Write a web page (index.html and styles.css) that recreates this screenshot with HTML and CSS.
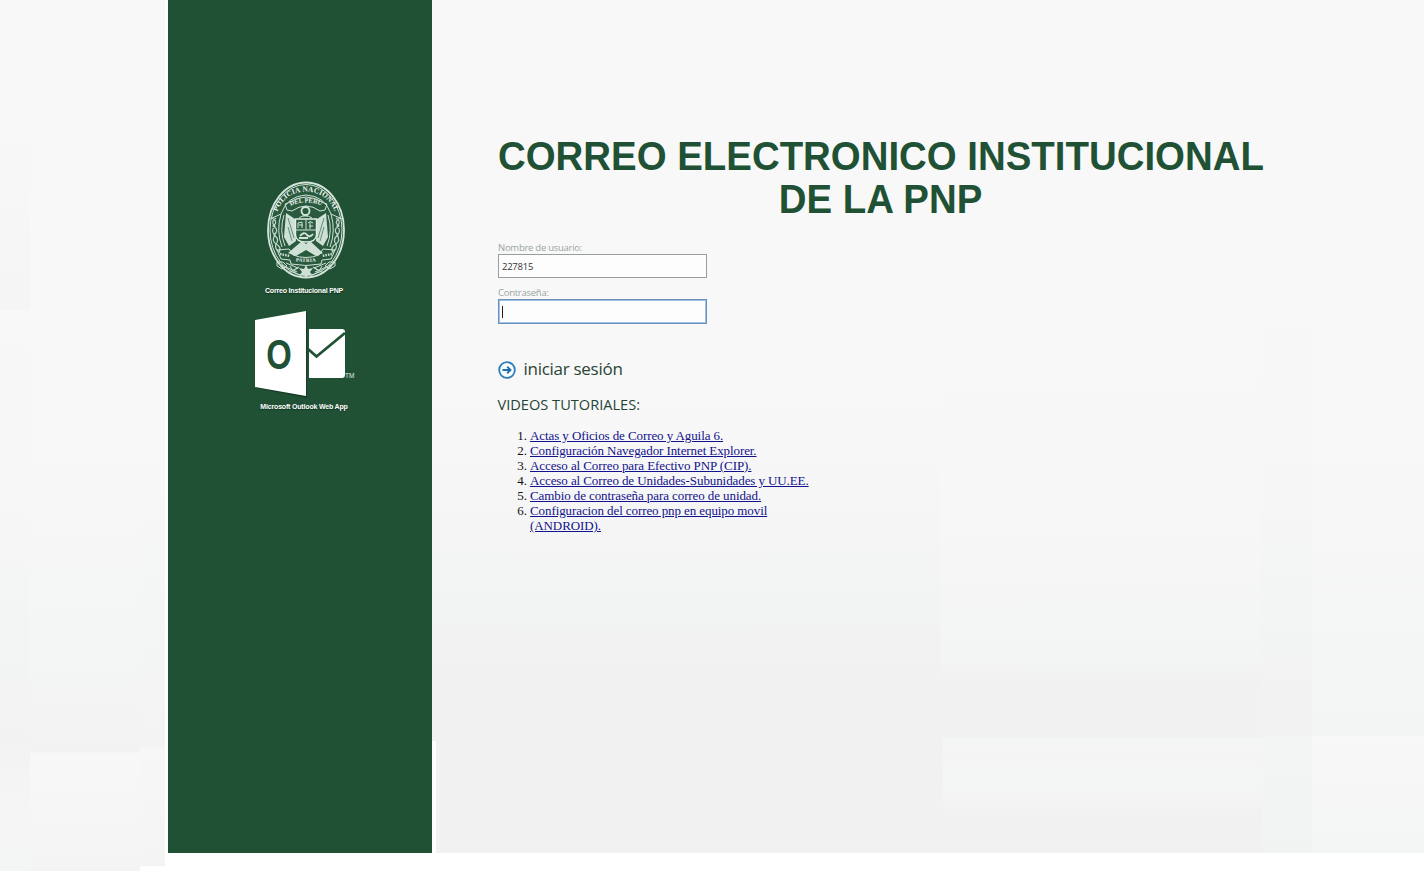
FILE: index.html
```html
<!DOCTYPE html>
<html lang="es">
<head>
<meta charset="utf-8">
<title>Correo Institucional PNP</title>
<link rel="stylesheet" href="styles.css">
</head>
<body>
<div class="page">
  <aside class="sidebar">
    <svg class="emblem" viewBox="0 0 80 98" width="80" height="98">
      <defs>
        <path id="arc-top" d="M9 45 C9 -1 71 -1 71 45"/>
        <path id="arc-mid" d="M20 27 Q40 16 60 27"/>
        <path id="arc-low" d="M24 79 Q40 83 56 79"/>
      </defs>
      <ellipse cx="40" cy="49" rx="38" ry="47.500" class="ring"/>
      <ellipse cx="40" cy="49" rx="36" ry="45.500" class="hair"/>
      <path class="hair" d="M4 38 L15 33 Q21 15 40 14 Q59 15 65 33 L76 38"/>
      <path class="hair" d="M15 33 Q10 50 16 66 M65 33 Q70 50 64 66 M18 34 Q13 50 19 65 M62 34 Q67 50 61 65"/>
      <path class="braid" d="M10 37 q-6 4 -1 8 q-5 5 0 9 q-4 5 1 9 q-2 5 4 8 M6 37 q7 4 1 8 q7 4 1 9 q6 4 2 9 q6 3 3 9"/>
      <path class="braid" d="M70 37 q6 4 1 8 q5 5 0 9 q4 5 -1 9 q2 5 -4 8 M74 37 q-7 4 -1 8 q-7 4 -1 9 q-6 4 -2 9 q-6 3 -3 9"/>
      <text class="seal-text"><textPath href="#arc-top" startOffset="50%">POLICIA NACIONAL</textPath></text>
      <path class="hair" d="M21 29 l-2 -6 3 -1 Q40 10 58 22 l3 1 -2 6 -5 1 Q40 20 26 30z"/>
      <text class="seal-text seal-small"><textPath href="#arc-mid" startOffset="50%">DEL PERU</textPath></text>
      <circle cx="39.500" cy="30" r="4" class="crown"/>
      <path class="hair" d="M33 37 Q39 32 46 37 M37 35 h5"/>
      <path class="leaf" d="M20 32 L29 38 30 60 23 65 18 56z M60 32 L51 38 50 60 57 65 62 56z"/>
      <path class="cut" d="M22 37 l6 20 M22 46 l4 14 M58 37 l-6 20 M58 46 l-4 14"/>
      <path class="shield" d="M29.500 38 H50.500 V54 Q50 61 40 61 Q30 61 29.500 54z"/>
      <path class="hair" d="M29.500 49 H50.500 M40 38 V49 M32 47 v-5 l4 -1 v6 M33 44 h4 M44 48 v-7 M42 42 q2 -3 5 0 M43 45 h4"/>
      <path class="crown" d="M34 55 q4 -5 7 -1 q3 3 6 -1 M33 57 h9"/>
      <path class="leaf" d="M22 72 L36 60 40 63 44 60 57 72 50 75 40 69 30 75z"/>
      <path class="hair" d="M11 69 L23 68 27 74 Q40 79 53 74 L57 68 69 69 65 78 56 79 55 83 Q40 86 25 83 L24 79 15 78z"/>
      <path class="dots" d="M14 73 l10 2 M66 73 l-10 2"/>
      <text class="seal-text seal-low"><textPath href="#arc-low" startOffset="50%">PATRIA</textPath></text>
      <path class="hair" d="M11 81 h6 l4 4 -5 3 -5 -3z M69 81 h-6 l-4 4 5 3 5 -3z M20 82 l12 5 -10 5 M60 82 l-12 5 10 5 M24 85 q3 7 10 9 M56 85 q-3 7 -10 9"/>
      <path class="braid" d="M13 83 l18 8 M67 83 l-18 8 M23 92 l10 -6 M57 92 l-10 -6"/>
      <path class="leaf" d="M40 84 l2 4 5 -1 -3 4 3 4 -5 -1 -2 3 -2 -3 -5 1 3 -4 -3 -4 5 1z"/>
    </svg>
    <p class="caption">Correo Institucional PNP</p>
    <svg class="outlook" viewBox="0 0 104 90" width="104" height="90">
      <path class="shade" d="M2 11.500 L53 2 V88 L2 78z"/>
      <path class="white" d="M1 10 L52 1 V86 L1 77z"/>
      <text class="letter-o" transform="translate(25 59) scale(.78 1)">O</text>
      <path class="white" d="M55 19 H88 Q91 19 91 22 V65 Q91 68 88 68 H55z"/>
      <path class="check" d="M54 39 L62.500 46.500 L91 23"/>
      <text class="tm" x="91" y="67.500">TM</text>
    </svg>
    <p class="caption caption-app">Microsoft Outlook Web App</p>
  </aside>
  <main class="content">
    <h1 class="title">CORREO ELECTRONICO INSTITUCIONAL<br>DE LA PNP</h1>
    <form class="form">
      <label class="label" for="user">Nombre de usuario:</label>
      <input class="field-box" id="user" type="text" value="227815">
      <label class="label label-pass" for="pass">Contraseña:</label>
      <div class="field-box focused" id="pass"><span class="caret"></span></div>
    </form>
    <div class="signin">
      <svg class="go" width="18" height="18" viewBox="0 0 18 18">
        <circle cx="9" cy="9" r="7.800" fill="#fafdfe" stroke="#2b7dbb" stroke-width="1.800"/>
        <path d="M4.500 9 H12.200 M9.200 5.800 L12.500 9 L9.200 12.200" fill="none" stroke="#226eaa" stroke-width="1.900"/>
      </svg>
      <span class="signin-text">iniciar sesión</span>
    </div>
    <h2 class="videos">VIDEOS TUTORIALES:</h2>
    <ol class="links">
      <li><a href="#">Actas y Oficios de Correo y Aguila 6.</a></li>
      <li><a href="#">Configuración Navegador Internet Explorer.</a></li>
      <li><a href="#">Acceso al Correo para Efectivo PNP (CIP).</a></li>
      <li><a href="#">Acceso al Correo de Unidades-Subunidades y UU.EE.</a></li>
      <li><a href="#">Cambio de contraseña para correo de unidad.</a></li>
      <li><a href="#">Configuracion del correo pnp en equipo movil<br>(ANDROID).</a></li>
    </ol>
  </main>
</div>
</body>
</html>
```
FILE: styles.css
```css
* { box-sizing: border-box; }
body { margin: 0; background: #fff; }
.page {
  display: grid;
  grid-template-columns: 264px 1fr;
  height: 871px;
  padding-left: 168px;
  overflow: hidden;
  background-repeat: no-repeat;
  background-image:
    linear-gradient(#f8f8f8 0 130px, #f5f5f5 310px, #f8f8f8 311px, #f7f7f7 500px, #f3f4f4 620px, #f2f2f2 740px, #f5f5f5 800px, #f4f5f5),
    linear-gradient(#f8f8f8 0 450px, #f4f5f5 650px, #f2f2f2 752px, #f8f8f8 753px, #f4f4f4),
    linear-gradient(#f8f8f8 0 450px, #f4f5f5 610px, #f3f3f3 747px, #f7f7f7 748px, #f4f4f4);
  background-size: 30px 871px, 110px 871px, 25px 866px;
  background-position: 0 0, 30px 0, 140px 0;
}
.sidebar {
  display: flex;
  flex-direction: column;
  align-items: center;
  height: 853px;
  padding-top: 181px;
  background: #205134;
}
.emblem { margin-left: 12px; }
.ring { fill: #2a5a3e; stroke: #d4e5dc; stroke-width: 1.8; }
.hair { fill: none; stroke: #cfe1d7; stroke-width: 1; }
.braid { fill: none; stroke: #c2d7cb; stroke-width: 1.2; }
.dots { fill: none; stroke: #c5d9ce; stroke-width: 2.4; stroke-dasharray: 1.6 1; }
.seal-text { fill: #eff7f2; font: bold 7.4px "Liberation Serif", serif; text-anchor: middle; letter-spacing: .1px; }
.seal-small { font-size: 6.4px; letter-spacing: 0; }
.seal-low { font-size: 5px; letter-spacing: .4px; }
.crown { fill: none; stroke: #d3e4da; stroke-width: 1.8; }
.leaf { fill: #cfe1d7; }
.cut { fill: none; stroke: #47745b; stroke-width: .8; }
.shield { fill: #2d5e42; stroke: #e2eee7; stroke-width: 1.4; }
.caption {
  margin: 6px 0 0 8px;
  color: #fff;
  font: bold 7px/12px "Liberation Sans", sans-serif;
  letter-spacing: -.18px;
  white-space: nowrap;
  text-shadow: 0 1px 1px #10331f;
}
.outlook { margin: 13px 0 0 11px; overflow: visible; }
.caption-app { margin-top: 1px; }
.white { fill: #fff; }
.shade { fill: #153c25; }
.letter-o { fill: #205134; font: bold 42px "Liberation Sans", sans-serif; text-anchor: middle; }
.check { fill: none; stroke: #205134; stroke-width: 2.8; }
.tm { fill: #e5eee8; font: 6.5px "Liberation Sans", sans-serif; }
.content {
  height: 853px;
  padding: 135px 0 0 66px;
  background-color: #f8f8f8;
  background-repeat: no-repeat;
  background-image:
    linear-gradient(#fff, #fff),
    linear-gradient(#f4f6f5, #f4f4f4 30%, #f4f6f5 60%, #f2f2f2),
    linear-gradient(#f8f8f8 0 400px, #f6f6f6 500px, #f2f3f3 600px, #f1f1f1 670px 853px),
    linear-gradient(#f8f8f8 0 360px, #f7f7f7 520px, #f3f4f4 660px, #f1f1f1 680px 853px),
    linear-gradient(#f8f8f8 0 305px, #f7f7f7 450px, #f3f4f4 600px, #f1f1f1 735px, #f3f5f4 736px, #f1f2f2 853px),
    linear-gradient(#f8f8f8 0 450px, #f4f5f5 680px, #f3f4f4 735px, #f8f8f8 736px, #f4f5f5 853px);
  background-size: 4px 112px, 320px 71px, 508px 853px, 322px 853px, 50px 853px, 112px 853px;
  background-position: 0 741px, 511px 738px, 0 0, 508px 0, 830px 0, 880px 0;
}
.title {
  width: 797px;
  margin: 0 0 0 -.5px;
  color: #205134;
  font: bold 40px/42.5px "Liberation Sans", sans-serif;
  text-align: center;
  white-space: nowrap;
  transform: scaleX(.96);
  transform-origin: left;
}
.form { width: 210px; margin-top: 21px; }
.label {
  display: block;
  height: 13px;
  color: #98a5a0;
  font: 9.5px/13px "Open Sans", sans-serif;
  letter-spacing: -.26px;
}
.label-pass { margin-top: 8px; }
.field-box {
  display: block;
  width: 209px;
  height: 24px;
  margin: 0;
  padding: 0 3px;
  border: 1px solid #989da0;
  background: #fdfdfd;
  color: #333;
  font: 9.5px "Open Sans", sans-serif;
  letter-spacing: -.25px;
  outline: none;
}
.focused { height: 25px; padding: 6px 4px; border: 1px solid #6590c2; box-shadow: inset 0 0 0 1px #a5c1e2; }
.caret { display: block; width: 1px; height: 12px; margin-left: -1px; background: #222; }
.signin { display: flex; align-items: center; gap: 8px; height: 24px; margin: 33px 0 0 -.5px; }
.go { margin-top: 2px; }
.signin-text { color: #274536; font: 17px/24px "Open Sans", sans-serif; letter-spacing: -.28px; white-space: nowrap; }
.videos { margin: 13px 0 0 -.5px; color: #274536; font: 14.6px/20px "Open Sans", sans-serif; }
.links { margin: 14px 0 0; padding-left: 32px; color: #111; font: 13px/15px "Liberation Serif", serif; letter-spacing: -.09px; }
.links a { color: #12128c; }
```
